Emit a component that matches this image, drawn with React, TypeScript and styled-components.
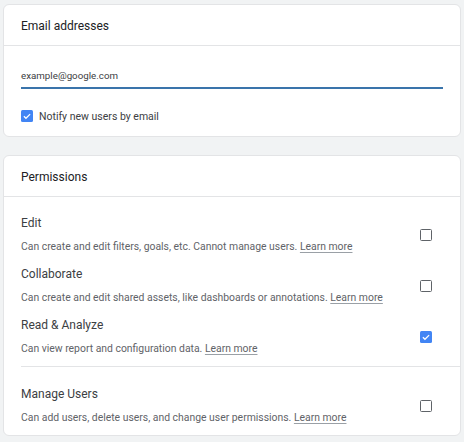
import React from "react";
import styled, { createGlobalStyle } from "styled-components";

const Global = createGlobalStyle`
  html, body { margin: 0; padding: 0; background: #f1f3f4; }
  body { font-family: Roboto, "Liberation Sans", Arial, sans-serif; -webkit-font-smoothing: antialiased; }
  * { box-sizing: border-box; }
`;

const Page = styled.div`
  display: flex;
  flex-direction: column;
  gap: 18px;
  padding: 4px 3px 6px 3px;
  width: 464px;
`;

const Card = styled.section`
  background: #fff;
  border: 1px solid #e3e4e6;
  border-radius: 6px;
  display: flex;
  flex-direction: column;
`;

const CardHeader = styled.h2`
  margin: 0;
  height: 41px;
  display: flex;
  align-items: center;
  padding: 1px 17px 0 17px;
  font-size: 12px;
  font-weight: 400;
  color: #202124;
  border-bottom: 1px solid #e3e4e6;
`;

const EmailBody = styled.div`
  display: flex;
  flex-direction: column;
  padding: 22px 17px 12px 17px;
  gap: 19px;
`;

const InputField = styled.div`
  border-bottom: 2px solid #3a74ab;
  padding-bottom: 3px;
  font-size: 9.75px;
  line-height: 16px;
  color: #3c4043;
`;

const CheckRow = styled.label`
  display: flex;
  align-items: center;
  gap: 6px;
  height: 16px;
  font-size: 10.5px;
  color: #3c4043;
`;

const Box = styled.span<{ $checked?: boolean }>`
  flex: none;
  width: 12px;
  height: 12px;
  border-radius: 1.5px;
  display: flex;
  align-items: center;
  justify-content: center;
  background: ${(p) => (p.$checked ? "#4285f4" : "#fff")};
  border: ${(p) => (p.$checked ? "none" : "1.6px solid #5f6368")};
`;

const Group = styled.div<{ $top: number }>`
  display: flex;
  flex-direction: column;
  padding: ${(p) => p.$top}px 0 4px 0;
`;

const GroupDivider = styled.hr`
  margin: 0 0 0 17px;
  border: none;
  border-top: 1px solid #e3e4e6;
`;

const PermRow = styled.div`
  display: flex;
  align-items: center;
  height: 51px;
  padding: 5px 28px 5px 17px;
`;

const PermText = styled.div`
  flex: 1;
  display: flex;
  flex-direction: column;
  gap: 7px;
`;

const PermTitle = styled.div`
  font-size: 12px;
  line-height: 18px;
  color: #3c4043;
`;

const PermDesc = styled.div`
  font-size: 10.4px;
  line-height: 16px;
  color: #5f6368;
  white-space: nowrap;
`;

const Learn = styled.a`
  color: #5f6368;
  text-decoration: underline;
  text-decoration-color: #9aa0a6;
  text-underline-offset: 2px;
  cursor: pointer;
`;

const Check = ({ checked }: { checked?: boolean }) => (
  <Box $checked={checked}>
    {checked && (
      <svg width="10" height="10" viewBox="0 0 24 24">
        <path d="M4.5 12.5l5 5 10-10" fill="none" stroke="#fff" strokeWidth="3" />
      </svg>
    )}
  </Box>
);

type Perm = { title: string; desc: string; checked?: boolean };

const Row = ({ p }: { p: Perm }) => (
  <PermRow>
    <PermText>
      <PermTitle>{p.title}</PermTitle>
      <PermDesc>
        {p.desc} <Learn>Learn more</Learn>
      </PermDesc>
    </PermText>
    <Check checked={p.checked} />
  </PermRow>
);

const main: Perm[] = [
  { title: "Edit", desc: "Can create and edit filters, goals, etc. Cannot manage users." },
  { title: "Collaborate", desc: "Can create and edit shared assets, like dashboards or annotations." },
  { title: "Read & Analyze", desc: "Can view report and configuration data.", checked: true },
];

const manage: Perm = {
  title: "Manage Users",
  desc: "Can add users, delete users, and change user permissions.",
};

export default function App() {
  return (
    <>
      <Global />
      <Page>
        <Card>
          <CardHeader>Email addresses</CardHeader>
          <EmailBody>
            <InputField>example@google.com</InputField>
            <CheckRow>
              <Check checked />
              Notify new users by email
            </CheckRow>
          </EmailBody>
        </Card>
        <Card>
          <CardHeader>Permissions</CardHeader>
          <Group $top={12}>
            {main.map((p) => (
              <Row key={p.title} p={p} />
            ))}
          </Group>
          <GroupDivider />
          <Group $top={13}>
            <Row p={manage} />
          </Group>
        </Card>
      </Page>
    </>
  );
}
